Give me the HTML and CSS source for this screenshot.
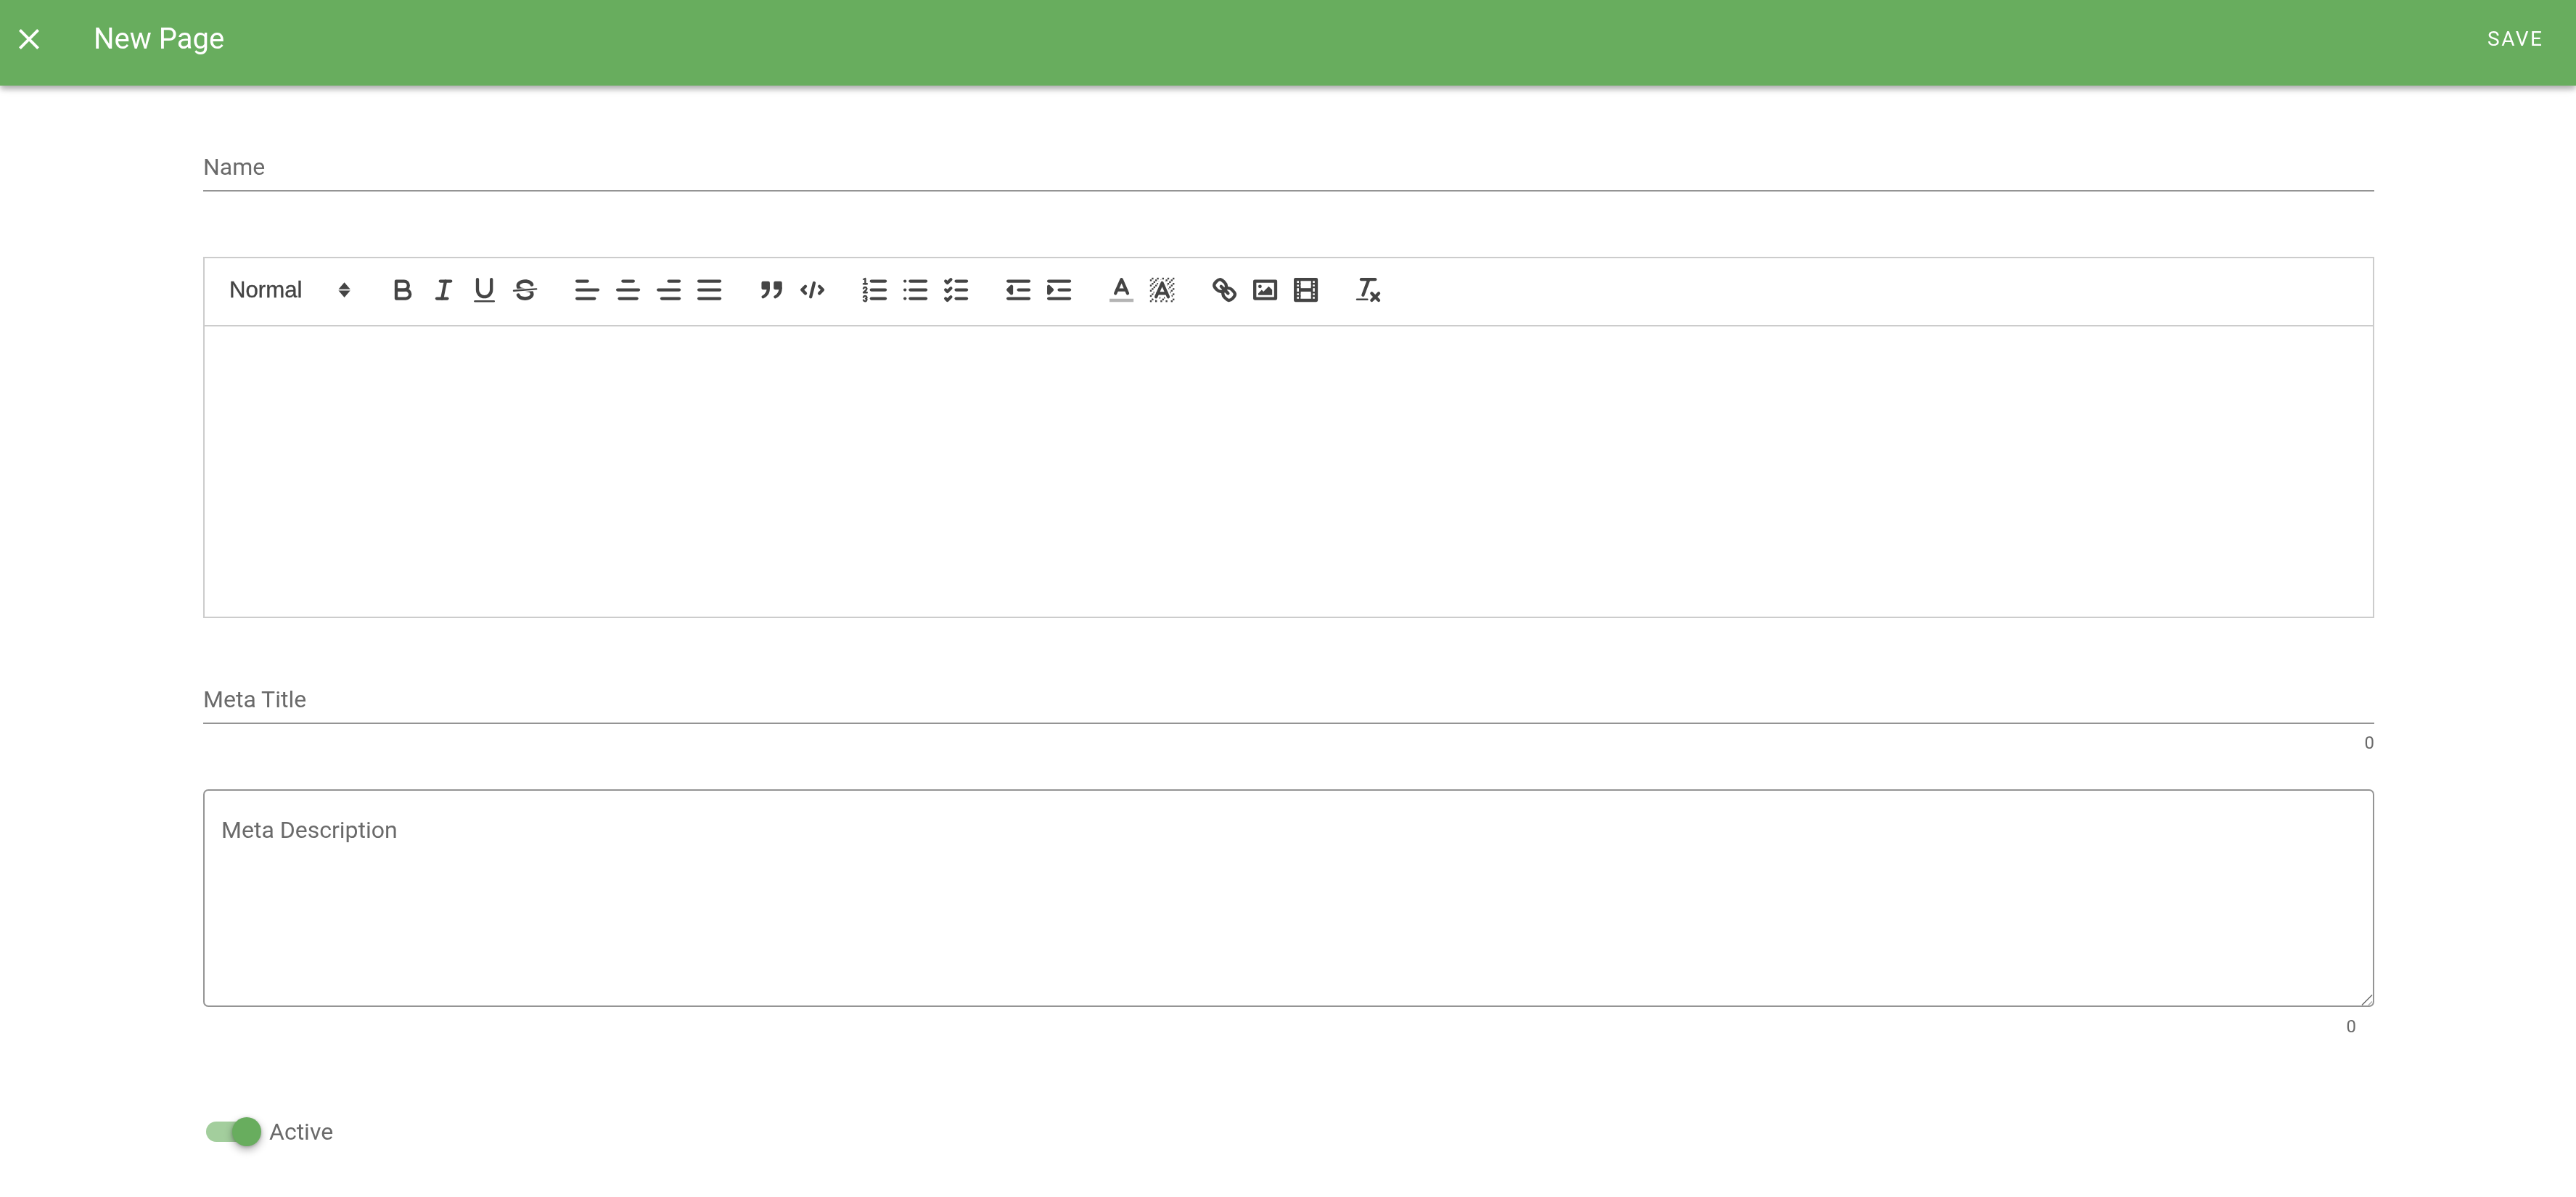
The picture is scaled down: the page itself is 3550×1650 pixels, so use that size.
FILE: index.html
```html
<!DOCTYPE html>
<html lang="en">
<head>
<meta charset="utf-8">
<title>New Page</title>
<link rel="stylesheet" href="styles.css">
</head>
<body>
<header class="appbar">
  <svg class="close" viewBox="0 0 24 24"><path d="M19 6.41L17.59 5 12 10.59 6.41 5 5 6.41 10.59 12 5 17.59 6.41 19 12 13.41 17.59 19 19 17.59 13.41 12z"/></svg>
  <h1 class="title">New Page</h1>
  <span class="save">SAVE</span>
</header>
<main class="form">
  <div class="line-field">Name</div>

  <section class="editor">
    <div class="toolbar">
      <div class="picker"><span>Normal</span>
        <svg viewBox="0 0 18 18"><polygon class="fl" points="5.6 8.6 9 4.7 12.4 8.6"/><polygon class="fl" points="5.6 9.4 9 13.3 12.4 9.4"/></svg>
      </div>
      <div class="group">
        <svg viewBox="0 0 18 18"><path class="st" d="M5,4H9.5A2.5,2.5,0,0,1,12,6.5v0A2.5,2.5,0,0,1,9.5,9H5A0,0,0,0,1,5,9V4A0,0,0,0,1,5,4Z"/><path class="st" d="M5,9h5.5A2.5,2.5,0,0,1,13,11.5v0A2.5,2.5,0,0,1,10.5,14H5a0,0,0,0,1,0,0V9A0,0,0,0,1,5,9Z"/></svg>
        <svg viewBox="0 0 18 18"><line class="st" x1="7" x2="13" y1="4" y2="4"/><line class="st" x1="5" x2="11" y1="14" y2="14"/><line class="st" x1="8" x2="10" y1="14" y2="4"/></svg>
        <svg viewBox="0 0 18 18"><path class="st" d="M5,3V9a4.012,4.012,0,0,0,4,4H9a4.012,4.012,0,0,0,4-4V3"/><rect class="fl" height="1" rx="0.5" ry="0.5" width="12" x="3" y="15"/></svg>
        <svg viewBox="0 0 18 18"><line class="st thin" x1="15.5" x2="2.5" y1="8.5" y2="9.5"/><path class="fl" d="M9.007,8C6.542,7.791,6,7.519,6,6.5,6,5.792,7.283,5,9,5c1.571,0,2.765.679,2.969,1.309a1,1,0,0,0,1.9-.617C13.356,4.106,11.354,3,9,3,6.2,3,4,4.538,4,6.5a3.2,3.2,0,0,0,.5,1.843Z"/><path class="fl" d="M8.984,10C11.457,10.208,12,10.479,12,11.5c0,.708-1.283,1.5-3,1.5-1.571,0-2.765-.679-2.969-1.309a1,1,0,1,0-1.9.617C4.644,13.894,6.646,15,9,15c2.8,0,5-1.538,5-3.5a3.2,3.2,0,0,0-.5-1.843Z"/></svg>
      </div>
      <div class="group">
        <svg viewBox="0 0 18 18"><line class="st" x1="3" x2="15" y1="9" y2="9"/><line class="st" x1="3" x2="13" y1="14" y2="14"/><line class="st" x1="3" x2="9" y1="4" y2="4"/></svg>
        <svg viewBox="0 0 18 18"><line class="st" x1="15" x2="3" y1="9" y2="9"/><line class="st" x1="14" x2="4" y1="14" y2="14"/><line class="st" x1="12" x2="6" y1="4" y2="4"/></svg>
        <svg viewBox="0 0 18 18"><line class="st" x1="15" x2="3" y1="9" y2="9"/><line class="st" x1="15" x2="5" y1="14" y2="14"/><line class="st" x1="15" x2="9" y1="4" y2="4"/></svg>
        <svg viewBox="0 0 18 18"><line class="st" x1="15" x2="3" y1="9" y2="9"/><line class="st" x1="15" x2="3" y1="14" y2="14"/><line class="st" x1="15" x2="3" y1="4" y2="4"/></svg>
      </div>
      <div class="group">
        <svg viewBox="0 0 18 18"><rect class="fl st" height="3" width="3" x="4" y="5"/><rect class="fl st" height="3" width="3" x="11" y="5"/><path class="fl st" d="M7,8c0,4.031-3,5-3,5"/><path class="fl st" d="M14,8c0,4.031-3,5-3,5"/></svg>
        <svg viewBox="0 0 18 18"><polyline class="st" points="5 7 3 9 5 11"/><polyline class="st" points="13 7 15 9 13 11"/><line class="st" x1="10" x2="8" y1="5" y2="13"/></svg>
      </div>
      <div class="group">
        <svg viewBox="0 0 18 18"><line class="st" x1="7" x2="15" y1="4" y2="4"/><line class="st" x1="7" x2="15" y1="9" y2="9"/><line class="st" x1="7" x2="15" y1="14" y2="14"/><line class="st thin" x1="2.5" x2="4.5" y1="5.5" y2="5.5"/><path class="fl" d="M3.5,6A0.5,0.5,0,0,1,3,5.5V3.085l-0.276.138A0.5,0.5,0,0,1,2.053,3c-0.124-.247-0.023-0.324.224-0.447l1-.5A0.5,0.5,0,0,1,4,2.5v3A0.5,0.5,0,0,1,3.5,6Z"/><path class="st thin" d="M4.5,10.5h-2c0-.234,1.85-1.076,1.85-2.234A0.959,0.959,0,0,0,2.5,8.156"/><path class="st thin" d="M2.5,14.846a0.959,0.959,0,0,0,1.85-.109A0.7,0.7,0,0,0,3.75,14a0.688,0.688,0,0,0,.6-0.736,0.959,0.959,0,0,0-1.85-.109"/></svg>
        <svg viewBox="0 0 18 18"><line class="st" x1="6" x2="15" y1="4" y2="4"/><line class="st" x1="6" x2="15" y1="9" y2="9"/><line class="st" x1="6" x2="15" y1="14" y2="14"/><line class="st" x1="3" x2="3" y1="4" y2="4"/><line class="st" x1="3" x2="3" y1="9" y2="9"/><line class="st" x1="3" x2="3" y1="14" y2="14"/></svg>
        <svg viewBox="0 0 18 18"><line class="st" x1="9" x2="15" y1="4" y2="4"/><polyline class="st" points="3 4 4 5 6 3"/><line class="st" x1="9" x2="15" y1="14" y2="14"/><polyline class="st" points="3 14 4 15 6 13"/><line class="st" x1="9" x2="15" y1="9" y2="9"/><polyline class="st" points="3 9 4 10 6 8"/></svg>
      </div>
      <div class="group">
        <svg viewBox="0 0 18 18"><line class="st" x1="3" x2="15" y1="14" y2="14"/><line class="st" x1="3" x2="15" y1="4" y2="4"/><line class="st" x1="9" x2="15" y1="9" y2="9"/><polyline class="fl st" points="5 7 5 11 3 9 5 7"/></svg>
        <svg viewBox="0 0 18 18"><line class="st" x1="3" x2="15" y1="14" y2="14"/><line class="st" x1="3" x2="15" y1="4" y2="4"/><line class="st" x1="9" x2="15" y1="9" y2="9"/><polyline class="fl st" points="3 7 3 11 5 9 3 7"/></svg>
      </div>
      <div class="group">
        <svg viewBox="0 0 18 18"><line class="st faint" x1="3" x2="15" y1="15" y2="15"/><polyline class="st" points="5.5 11 9 3 12.5 11"/><line class="st" x1="11.63" x2="6.38" y1="9" y2="9"/></svg>
        <svg viewBox="0 0 18 18"><g class="fl"><polygon points="6 6.868 6 6 5 6 5 7 5.942 7 6 6.868"/><rect height="1" width="1" x="4" y="4"/><polygon points="6.817 5 6 5 6 6 6.38 6 6.817 5"/><rect height="1" width="1" x="2" y="6"/><rect height="1" width="1" x="3" y="5"/><rect height="1" width="1" x="4" y="7"/><polygon points="4 11.439 4 11 3 11 3 12 3.755 12 4 11.439"/><rect height="1" width="1" x="2" y="12"/><rect height="1" width="1" x="2" y="9"/><rect height="1" width="1" x="2" y="15"/><polygon points="4.63 10 4 10 4 11 4.192 11 4.63 10"/><rect height="1" width="1" x="3" y="8"/><path d="M10.832,4.2L11,4.582V4H10.708A1.948,1.948,0,0,1,10.832,4.2Z"/><path d="M7,4.582L7.168,4.2A1.929,1.929,0,0,1,7.292,4H7V4.582Z"/><path d="M8,13H7.683l-0.351.8a1.933,1.933,0,0,1-.124.2H8V13Z"/><rect height="1" width="1" x="12" y="2"/><rect height="1" width="1" x="11" y="3"/><path d="M9,3H8V3.282A1.985,1.985,0,0,1,9,3Z"/><rect height="1" width="1" x="2" y="3"/><rect height="1" width="1" x="6" y="2"/><rect height="1" width="1" x="3" y="2"/><rect height="1" width="1" x="5" y="3"/><rect height="1" width="1" x="9" y="2"/><rect height="1" width="1" x="15" y="14"/><polygon points="13.447 10.174 13.469 10.225 13.472 10.232 13.808 11 14 11 14 10 13.37 10 13.447 10.174"/><rect height="1" width="1" x="13" y="7"/><rect height="1" width="1" x="15" y="5"/><rect height="1" width="1" x="14" y="6"/><rect height="1" width="1" x="15" y="8"/><rect height="1" width="1" x="14" y="9"/><path d="M3.775,14H3v1H4V14.314A1.97,1.97,0,0,1,3.775,14Z"/><rect height="1" width="1" x="14" y="3"/><polygon points="12 6.868 12 6 11.62 6 12 6.868"/><rect height="1" width="1" x="15" y="2"/><rect height="1" width="1" x="12" y="5"/><rect height="1" width="1" x="13" y="4"/><polygon points="12.933 9 13 9 13 8 12.495 8 12.933 9"/><rect height="1" width="1" x="9" y="14"/><rect height="1" width="1" x="8" y="15"/><path d="M6,14.926A1.927,1.927,0,0,1,5.2,14.8H5V15H6V14.926Z"/><rect height="1" width="1" x="5" y="15"/><path d="M10.668,13.8L10.317,13H10v1h0.792A1.947,1.947,0,0,1,10.668,13.8Z"/><rect height="1" width="1" x="11" y="15"/><path d="M14.332,12.2a1.99,1.99,0,0,1,.166.8H15V12H14.245Z"/><rect height="1" width="1" x="14" y="15"/><rect height="1" width="1" x="15" y="11"/></g><polyline class="st" points="5.5 13 9 5 12.5 13"/><line class="st" x1="11.63" x2="6.38" y1="11" y2="11"/></svg>
      </div>
      <div class="group">
        <svg viewBox="0 0 18 18"><line class="st" x1="7" x2="11" y1="7" y2="11"/><path class="st" d="M8.9,4.577a3.476,3.476,0,0,1,.36,4.679A3.476,3.476,0,0,1,4.577,8.9C3.185,7.5,2.035,6.4,4.217,4.217S7.5,3.185,8.9,4.577Z"/><path class="st" d="M13.423,9.1a3.476,3.476,0,0,0-4.679-.36,3.476,3.476,0,0,0,.36,4.679c1.392,1.392,2.5,2.542,4.679.36S14.815,10.5,13.423,9.1Z"/></svg>
        <svg viewBox="0 0 18 18"><rect class="st" height="10" width="12" x="3" y="4"/><circle class="fl" cx="6" cy="7" r="1"/><polyline class="fl" points="5 12 5 11 7 9 8 10 11 7 13 9 13 12 5 12"/></svg>
        <svg viewBox="0 0 18 18"><rect class="st" height="12" width="12" x="3" y="3"/><rect class="fl" height="12" width="1" x="5" y="3"/><rect class="fl" height="12" width="1" x="12" y="3"/><rect class="fl" height="2" width="8" x="5" y="8"/><rect class="fl" height="1" width="3" x="3" y="5"/><rect class="fl" height="1" width="3" x="3" y="7"/><rect class="fl" height="1" width="3" x="3" y="10"/><rect class="fl" height="1" width="3" x="3" y="12"/><rect class="fl" height="1" width="3" x="12" y="5"/><rect class="fl" height="1" width="3" x="12" y="7"/><rect class="fl" height="1" width="3" x="12" y="10"/><rect class="fl" height="1" width="3" x="12" y="12"/></svg>
      </div>
      <div class="group">
        <svg viewBox="0 0 18 18"><line class="st" x1="5" x2="13" y1="3" y2="3"/><line class="st" x1="6" x2="9.35" y1="12" y2="3"/><line class="st" x1="11" x2="15" y1="11" y2="15"/><line class="st" x1="15" x2="11" y1="11" y2="15"/><rect class="fl" height="1" rx="0.5" ry="0.5" width="7" x="2" y="14"/></svg>
      </div>
    </div>
    <div class="editor-body"></div>
  </section>

  <div class="line-field meta-title">Meta Title</div>
  <div class="counter">0</div>

  <div class="textarea">Meta Description
    <svg class="resizer" viewBox="0 0 16 16"><line x1="1" y1="15.5" x2="15" y2="1.5"/><line class="resizer-short" x1="10" y1="15.5" x2="15" y2="10.5"/></svg>
  </div>
  <div class="counter counter-inset">0</div>

  <div class="active-row">
    <span class="switch"><span class="track"></span><span class="thumb"></span></span>
    <span>Active</span>
  </div>
</main>
</body>
</html>
```
FILE: styles.css
```css
* { box-sizing: border-box; }
html, body { margin: 0; height: 100%; }
body {
  background: #fff;
  color: #6a6a6a;
  font-family: Roboto, "Liberation Sans", sans-serif;
  font-size: 32px;
  overflow: hidden;
}
.appbar {
  position: relative;
  z-index: 1;
  display: flex;
  align-items: center;
  height: 118px;
  padding: 0 0 10px 16px;
  background: #68ad5e;
  color: #fff;
  box-shadow: 0 4px 8px -1px rgba(0,0,0,.2), 0 6px 8px 0 rgba(0,0,0,.14), 0 2px 16px 0 rgba(0,0,0,.08);
}
.close { width: 48px; height: 48px; fill: #fff; flex: none; }
.title {
  margin: 0 0 0 65px;
  font-size: 40px;
  font-weight: 400;
  line-height: 48px;
  flex: 1;
  will-change: transform;
}
.save {
  margin-right: 45px;
  font-size: 28px;
  letter-spacing: 2.5px;
  line-height: 36px;
  will-change: transform;
}
.form { padding: 91px 278px 0 280px; will-change: transform; }
.line-field {
  height: 55px;
  line-height: 43px;
  border-bottom: 2px solid #949494;
}
.editor { margin-top: 90px; border: 2px solid #ccc; }
.toolbar {
  display: flex;
  align-items: center;
  height: 94px;
  padding: 0 0 4px 19px;
  border-bottom: 2px solid #ccc;
}
.picker {
  display: flex;
  align-items: center;
  justify-content: space-between;
  width: 197px;
  padding: 0 2px 0 15px;
  margin-right: 30px;
  color: #444;
  font-family: "Liberation Sans", Arial, sans-serif;
  font-size: 31.2px;
  -webkit-text-stroke: .4px #444;
}
.group { display: flex; margin-right: 30px; }
.toolbar svg { display: block; flex: none; width: 43.2px; height: 43.2px; }
.group svg { margin: 0 6.4px; }
.st {
  fill: none;
  stroke: #444;
  stroke-width: 1.8;
  stroke-linecap: round;
  stroke-linejoin: round;
}
.fl { fill: #444; }
.st.fl { fill: #444; }
.thin { stroke-width: 1; }
.faint { stroke-opacity: .4; stroke-linecap: square; }
.editor-body { height: 400px; }
.meta-title { margin-top: 91px; }
.counter {
  height: 32px;
  margin-top: 11px;
  font-size: 24px;
  line-height: 30px;
  text-align: right;
}
.counter-inset { margin-top: 12px; padding-right: 25px; }
.textarea {
  position: relative;
  display: block;
  height: 300px;
  margin-top: 47px;
  padding: 34px 23px;
  border: 2px solid #949494;
  border-radius: 7px;
  line-height: 40px;
}
.resizer {
  position: absolute;
  right: 0;
  bottom: 0;
  width: 16px;
  height: 16px;
  fill: none;
  stroke: #666;
  stroke-width: 1.4;
}
.resizer-short { stroke: #aaa; }
.active-row {
  display: flex;
  align-items: center;
  gap: 11px;
  margin-top: 108px;
  height: 40px;
}
.switch { position: relative; display: block; width: 76px; height: 40px; margin-left: 4px; }
.track {
  display: block;
  width: 70px;
  height: 28px;
  margin-top: 6px;
  border-radius: 14px;
  background: #a3ce9d;
}
.thumb {
  position: absolute;
  top: 0;
  right: 0;
  width: 40px;
  height: 40px;
  border-radius: 50%;
  background: #68ad5e;
  box-shadow: 0 5px 12px rgba(0,0,0,.3), 0 1px 4px rgba(0,0,0,.2);
}
```
